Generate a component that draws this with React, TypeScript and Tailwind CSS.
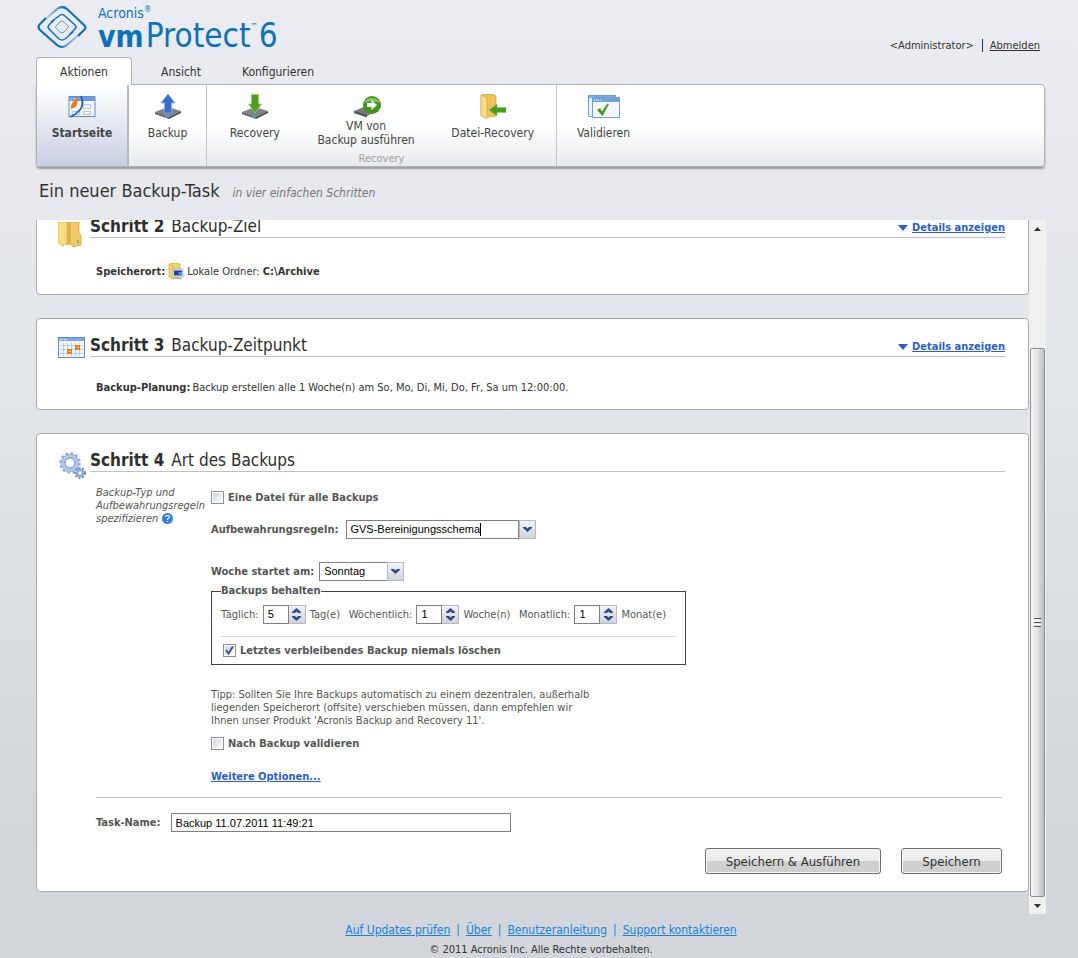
import React from "react";

const Logo = () => (
  <div className="flex items-start gap-[11px] pl-px">
    <svg className="mt-[5px]" width="50" height="44" viewBox="0 0 50 44" fill="none">
      <defs>
        <linearGradient id="fadeA" gradientUnits="userSpaceOnUse" x1="5" y1="17" x2="38" y2="34">
          <stop offset="0" stopColor="#0a72ba" stopOpacity="0.1" />
          <stop offset="0.35" stopColor="#0a72ba" />
          <stop offset="1" stopColor="#0a72ba" />
        </linearGradient>
        <linearGradient id="fadeB" gradientUnits="userSpaceOnUse" x1="45" y1="27" x2="12" y2="10">
          <stop offset="0" stopColor="#0a72ba" stopOpacity="0.1" />
          <stop offset="0.35" stopColor="#0a72ba" />
          <stop offset="1" stopColor="#0a72ba" />
        </linearGradient>
      </defs>
      <path d="M5 17 L20 4 Q25 0 30 4 L47 20 Q50 23 47 25 L41 31" stroke="url(#fadeA)" strokeWidth="2.200" />
      <path d="M45 27 L30 40 Q25 44 20 40 L3 25 Q0 22 3 19 L9 13" stroke="url(#fadeB)" strokeWidth="2.200" />
      <path d="M14 17 L22 11 Q25 8 28 11 L38 20 Q40 22 38 24 L33 29" stroke="#0a72ba" strokeWidth="1.500" />
      <path d="M36 27 L28 34 Q25 36 22 34 L12 24 Q10 22 12 20 L17 15" stroke="#0a72ba" strokeWidth="1.500" />
      <path d="M23 17 Q25 15 27 17 L31 21 Q32 22 31 23 L27 27 Q25 29 23 27 L19 23 Q18 22 19 21 Z" stroke="#5c9fd2" />
    </svg>
    <div className="text-[#0a72ba]">
      <div className="mt-[6px] flex h-[14px] text-[14px] leading-[14px]">
        Acronis<span className="text-[8px] leading-[8px]">®</span>
      </div>
      <div className="flex h-[34px] items-start text-[33px] leading-[32px]">
        <span className="text-[30px] leading-[34px] font-bold">vm</span>
        <span className="ml-[2px]">Protect</span>
        <span className="text-[8px] leading-[14px]">™</span>
        <span className="ml-px">6</span>
      </div>
    </div>
  </div>
);

const StartIcon = () => (
  <svg width="28" height="28" viewBox="0 0 28 28">
    <rect x="1" y="2.500" width="26" height="20" fill="#f1f6fd" stroke="#5f8fd0" />
    <rect x="1" y="3" width="26" height="4" fill="#6f9ddb" />
    <path d="M3 5h1M5 5h1M7 5h1" stroke="#fff" />
    <path d="M15.500 10.500h7v4h-7zM15.500 17.500h7v3h-7zM4.500 17.500h7v3h-7z" fill="none" stroke="#b9c4d4" />
    <path d="M11 3 Q2 8 3 15 L8 13 Z" fill="#f27a1a" />
    <path d="M13 2 Q19 15 2 23" fill="none" stroke="#2b59c9" strokeWidth="1.800" />
  </svg>
);

const Disk = () => (
  <g>
    <path d="M1 18 L14 13 L27 17 L15 23 Z" fill="#808487" />
    <path d="M1 18 L15 23 V25 L1 20 Z" fill="#595c5f" />
    <path d="M15 23 L27 17 V19 L15 25 Z" fill="#484b4e" />
    <path d="M11 22 L15 23" stroke="#4aa3ee" strokeWidth="1.500" />
  </g>
);

const BackupIcon = () => (
  <svg width="28" height="28" viewBox="0 0 28 28">
    <Disk />
    <path d="M14 0 L21 9 H17.500 V19 H10.500 V9 H7 Z" fill="#3a6bd0" stroke="#8aaeea" strokeWidth="0.700" />
  </svg>
);

const RecoveryIcon = () => (
  <svg width="28" height="28" viewBox="0 0 28 28">
    <Disk />
    <path d="M14 19 L20.500 10 H17.500 V0.500 H10.500 V10 H7.500 Z" fill="#4c9f1f" stroke="#93cf6d" strokeWidth="0.700" />
  </svg>
);

const RunVmIcon = () => (
  <svg className="ml-1" width="28" height="25" viewBox="0 3 28 25">
    <path d="M0 20 L12 15 L22 20 L13 25 L0 22 Z" fill="#777b7e" />
    <path d="M0 20 L13 24 V26.500 L0 22 Z" fill="#505356" />
    <circle cx="18" cy="14" r="9" fill="#43951c" />
    <path d="M10 12 a9 9 0 0 1 16 0 Q18 8 10 12" fill="#8cc665" />
    <path d="M13 12 h4.500 v-3 l5.500 5 l-5.500 5 v-3 H13 Z" fill="#fff" />
  </svg>
);

const FolderRecoveryIcon = () => (
  <svg width="28" height="28" viewBox="0 0 28 28">
    <path d="M2 1 L14 0 L17 2 V22 L8 23 L2 21 Z" fill="#ecc25a" stroke="#c99b38" strokeWidth="0.700" />
    <path d="M2 1 L8 4 V25 L2 22 Z" fill="#f8dd8a" stroke="#d6ac4a" strokeWidth="0.700" />
    <path d="M10 16 L18 10 V13.500 H27 V18.500 H18 V22 Z" fill="#4b9d20" stroke="#86c35c" strokeWidth="0.500" />
  </svg>
);

const ValidateIcon = () => (
  <svg width="32" height="28" viewBox="0 0 32 28">
    <path d="M.5 1.500H27.500V22.500H.5Z" fill="#eaf2fc" stroke="#6f9bd6" />
    <path d="M1 2H27V4H1Z" fill="#7fa8de" />
    <path d="M4.500 3.500H31.500V23.500H4.500Z" fill="#f4f9ff" stroke="#6f9bd6" />
    <path d="M5 4H31V8H5Z" fill="#739fdc" />
    <path d="M6 6h8" stroke="#fff" strokeDasharray="1 1" />
    <path d="M9 16 L12 14 L14 17.500 L19.500 9.500 L21 10 L14.500 22 Z" fill="#3f9c1a" />
  </svg>
);

const FolderIcon = () => (
  <svg width="28" height="28" viewBox="0 0 28 28">
    <path d="M8 0 H20 V22 L8 23 Z" fill="#e3b458" />
    <path d="M0 0 L9 0 V21 L5 24 L0 21 Z" fill="#f8dd7f" stroke="#d9b04e" strokeWidth="0.700" />
    <path d="M12 0 L21 0 V12 L23 13 V23 L15 25 L12 21 Z" fill="#f2ca69" stroke="#c79b3d" strokeWidth="0.700" />
    <path d="M20 18v3" stroke="#4fb56a" strokeWidth="1.500" />
  </svg>
);

const CalendarIcon = () => (
  <svg width="28" height="22" viewBox="0 0 28 22">
    <rect x=".5" y=".5" width="26" height="20" fill="#f3f7fd" stroke="#5f8bc9" />
    <rect x="1" y="1" width="25" height="3" fill="#7fa6dc" />
    <path d="M2 2.500h7" stroke="#fff" strokeDasharray="1 1" />
    <path d="M2 8.500H25M2 12.500H25M2 16.500H25M5.500 6V19M9.500 6V19M13.500 6V19M17.500 6V19M21.500 6V19" stroke="#b5cdeb" />
    <rect x="9" y="12" width="5" height="5" fill="#f0801f" />
    <rect x="17" y="8" width="5" height="5" fill="#f0801f" />
    <path d="M11 14.500h2M19 10.500h2" stroke="#ffe2bd" />
  </svg>
);

const GearsIcon = () => (
  <svg width="28" height="28" viewBox="0 0 28 28" fill="none">
    <circle cx="12" cy="11" r="9.500" stroke="#8ba8d6" strokeWidth="2.500" strokeDasharray="2.500 2.500" />
    <circle cx="12" cy="11" r="7" stroke="#b3c8ea" strokeWidth="4" />
    <circle cx="12" cy="11" r="5" stroke="#6688bd" />
    <circle cx="12" cy="11" r="8.800" stroke="#8aa5d2" strokeWidth="0.700" />
    <circle cx="22" cy="21" r="5" stroke="#6383b8" strokeWidth="2" strokeDasharray="1.800 1.800" />
    <circle cx="22" cy="21" r="3.500" stroke="#8fabd8" strokeWidth="2.200" />
    <circle cx="22" cy="21" r="2.200" fill="#fff" stroke="#5c7db4" strokeWidth="0.700" />
  </svg>
);

const LocalFolderIcon = () => (
  <svg width="16" height="17" viewBox="0 0 16 17">
    <path d="M1 1 L6 0 L12 1 V14 L4 16 L1 14 Z" fill="#f3d470" stroke="#c9a244" strokeWidth="0.700" />
    <path d="M5 2V8" stroke="#d2aa48" />
    <rect x="5" y="6" width="10" height="8" fill="#e9edf3" stroke="#9aa3b3" strokeWidth="0.700" />
    <rect x="6" y="7.500" width="8" height="5" fill="#1e3fb0" />
    <path d="M10 9h4v3h-3z" fill="#4a90d8" />
    <path d="M7 15.500h7" stroke="#a6adb8" />
  </svg>
);

const Chevron = ({ up = false }: { up?: boolean }) => (
  <svg width="9" height="5" viewBox="0 0 9 5" className={up ? "rotate-180" : ""}>
    <path d="M0 0 H3 L4.500 1.500 L6 0 H9 V1 L4.500 5 L0 1 Z" fill="#2c4a8c" />
  </svg>
);

const toolButton = "flex flex-col items-center pt-[9px] text-center leading-[14px]";

const DetailsLink = () => (
  <a href="#details" className="flex items-center gap-1 text-[11px] leading-[14px] font-bold text-[#2a5fc9]">
    <svg width="10" height="6" viewBox="0 0 10 6">
      <path d="M0 0H10L5 6Z" fill="#2a5fc9" />
    </svg>
    <span className="underline">Details anzeigen</span>
  </a>
);

type StepProps = {
  step: string;
  title: string;
  icon: React.ReactNode;
  details?: boolean;
  children: React.ReactNode;
};

const Step: React.FC<StepProps> = ({ step, title, icon, details, children }) => (
  <section className="shrink-0 rounded border border-[#a9abae] bg-white pt-[14px] pr-[23px] pl-[21px]">
    <div className="flex h-6 gap-1">
      <div className="mt-1 w-7 shrink-0">{icon}</div>
      <div className="flex flex-1 justify-between border-b border-[#c0c0c0]">
        <h2 className="flex gap-[7px] text-[17px] leading-6 text-[#2e2e2e]">
          <b>{step}</b>
          <span>{title}</span>
        </h2>
        {details && (
          <div className="flex items-center pt-1">
            <DetailsLink />
          </div>
        )}
      </div>
    </div>
    <div className="pl-[38px]">{children}</div>
  </section>
);

const CheckBox = ({ id, label, checked = false }: { id: string; label: string; checked?: boolean }) => (
  <div className="flex h-[13px] items-center gap-1 font-bold">
    <span className="relative flex h-[13px] w-[13px]">
      <input
        id={id}
        type="checkbox"
        defaultChecked={checked}
        className="peer h-[13px] w-[13px] appearance-none border border-[#8e8f8f] bg-linear-to-br from-[#cfd3d8] to-white shadow-[inset_0_0_0_1px_white]"
      />
      <svg className="pointer-events-none absolute inset-0 hidden peer-checked:block" width="13" height="13" viewBox="0 0 13 13">
        <path d="M3 6 L5.500 9.500 L10 2.500" fill="none" stroke="#3c549c" strokeWidth="2" />
      </svg>
    </span>
    <label htmlFor={id}>{label}</label>
  </div>
);

const dropButton =
  "flex w-[17px] items-center justify-center border border-[#b4b7cd] bg-linear-to-b from-[#f2f2f4] to-[#d3d4d8]";
const fieldFont = "font-['Liberation_Sans',Arial,sans-serif] text-[11px] text-black";

const Spinner = ({ id, label, value, unit }: { id: string; label: string; value: number; unit: string }) => (
  <div className="flex items-center gap-1">
    <label htmlFor={id}>{label}</label>
    <div className="flex h-[19px]">
      <input id={id} defaultValue={value} className={`w-[26px] border border-[#7f8083] pl-1 ${fieldFont}`} />
      <div className="flex w-[17px] flex-col border border-l-0 border-[#b4b7cd] bg-linear-to-b from-[#f2f2f4] to-[#d3d4d8]">
        <button aria-label={`${label} mehr`} className="flex flex-1 items-center justify-center">
          <Chevron up />
        </button>
        <button aria-label={`${label} weniger`} className="flex flex-1 items-center justify-center">
          <Chevron />
        </button>
      </div>
    </div>
    <span>{unit}</span>
  </div>
);

const actionButton =
  "h-[26px] rounded-[3px] border border-[#707070] bg-linear-to-b from-[#f2f2f2] from-0% via-[#ebebeb] via-50% to-[#cfcfcf] to-50% text-[13px] text-[#333] shadow-[inset_0_0_0_1px_#f6f6f6]";

const footerLinks = ["Auf Updates prüfen", "Über", "Benutzeranleitung", "Support kontaktieren"];

const App: React.FC = () => {
  return (
    <div className="flex h-screen flex-col bg-linear-to-b from-[#ebecf1] via-[#e2e5e9] via-40% to-[#d2d5da] to-90% pr-8 pl-9 font-['DejaVu_Sans_Condensed','DejaVu_Sans',Tahoma,sans-serif] text-[11px] leading-[13px] text-[#333]">
      <header className="flex h-[57px] shrink-0 justify-between">
        <Logo />
        <div className="mt-[38px] mr-[6px] flex h-[14px] items-center">
          <span>&lt;Administrator&gt;</span>
          <span className="mr-[7px] ml-2 h-[13px] w-px bg-[#333]" />
          <a href="#logout" className="underline">Abmelden</a>
        </div>
      </header>

      {/* Tabs */}
      <nav className="relative z-10 -mb-px flex h-7 shrink-0 text-xs">
        <button className="w-24 rounded-t-[4px] border border-b-0 border-[#b0b2b5] bg-white">Aktionen</button>
        <button className="w-[98px] pt-px">Ansicht</button>
        <button className="w-24 pt-px">Konfigurieren</button>
      </nav>

      {/* Ribbon */}
      <div className="mr-px flex h-[83px] shrink-0 rounded-r-[4px] rounded-bl-[4px] border border-[#b0b2b5] bg-linear-to-b from-white from-50% to-[#e7eaed] text-xs text-[#444] shadow-[0_2px_2px_#9a9c9f]">
        <button className={`${toolButton} w-[92px] border-r-2 border-[#b8b9bb] bg-linear-to-b from-white to-[#c8cfdf] font-bold`}>
          <StartIcon />
          <span className="mt-1">Startseite</span>
        </button>
        <button className={`${toolButton} w-[78px] border-r border-[#c3c5c8]`}>
          <BackupIcon />
          <span className="mt-1">Backup</span>
        </button>
        <div className="flex w-[350px] flex-col border-r border-[#c3c5c8]">
          <div className="flex flex-1">
            <button className={`${toolButton} w-24`}>
              <RecoveryIcon />
              <span className="mt-1">Recovery</span>
            </button>
            <button className={`${toolButton} w-[127px]`}>
              <RunVmIcon />
              <span>VM von<br />Backup ausführen</span>
            </button>
            <button className={`${toolButton} w-[127px]`}>
              <FolderRecoveryIcon />
              <span className="mt-1">Datei-Recovery</span>
            </button>
          </div>
          <div className="text-center text-[11px] leading-[14px] text-[#a0a0a0]">Recovery</div>
        </div>
        <button className={`${toolButton} w-[93px]`}>
          <ValidateIcon />
          <span className="mt-1">Validieren</span>
        </button>
      </div>

      <div className="flex h-[53px] shrink-0 items-baseline gap-[13px] pt-3 pl-[3px]">
        <h1 className="text-[18px] leading-6">Ein neuer Backup-Task</h1>
        <span className="text-xs text-[#777] italic">in vier einfachen Schritten</span>
      </div>

      {/* Steps, scrolled to the last one */}
      <main className="flex min-h-0 flex-1">
        <div className="flex min-w-0 flex-1 flex-col justify-end gap-[23px] overflow-hidden pb-[22px]">
          <Step step="Schritt 2" title="Backup-Ziel" icon={<div className="pt-1"><FolderIcon /></div>} details>
            <div className="flex h-[56px] items-center gap-[3px] pt-[10px]">
              <b>Speicherort:</b>
              <LocalFolderIcon />
              <span>Lokale Ordner: <b>C:\Archive</b></span>
            </div>
          </Step>

          <Step step="Schritt 3" title="Backup-Zeitpunkt" icon={<CalendarIcon />} details>
            <div className="flex h-[52px] gap-[2px] pt-6">
              <b>Backup-Planung:</b>
              <span>Backup erstellen alle 1 Woche(n) am So, Mo, Di, Mi, Do, Fr, Sa um 12:00:00.</span>
            </div>
          </Step>

          <Step step="Schritt 4" title="Art des Backups" icon={<GearsIcon />}>
            <div className="flex text-[#555]">
              <div className="w-[115px] shrink-0 pt-[14px] italic">
                Backup-Typ und
                <br />
                Aufbewahrungsregeln
                <br />
                <span className="flex items-center gap-1">
                  spezifizieren
                  <svg width="11" height="11" viewBox="0 0 11 11">
                    <circle cx="5.500" cy="5.500" r="5.500" fill="#2f80e0" />
                    <path d="M3.500 4 Q3.700 2.500 5.500 2.500 Q7.500 2.500 7.300 4.200 Q7 5.300 5.500 6 V7 M5.500 8 V9" fill="none" stroke="#fff" strokeWidth="1.200" />
                  </svg>
                </span>
              </div>

              <div className="flex-1 pt-[19px]">
                <CheckBox id="single-file" label="Eine Datei für alle Backups" />

                <div className="mt-4 flex h-[19px] items-center gap-2">
                  <label htmlFor="rules" className="font-bold">Aufbewahrungsregeln:</label>
                  <div className="flex h-[19px] w-[190px]">
                    <div className="flex flex-1 items-center border border-[#7f8083] pl-[3px]">
                      <input
                        id="rules"
                        role="combobox"
                        defaultValue="GVS-Bereinigungsschema"
                        className={`[field-sizing:content] ${fieldFont}`}
                      />
                      <span className="h-[13px] w-px bg-black" />
                    </div>
                    <button aria-label="Regeln öffnen" className={dropButton}>
                      <Chevron />
                    </button>
                  </div>
                </div>

                <div className="mt-[23px] flex h-[19px] items-center gap-[5px]">
                  <label htmlFor="weekday" className="font-bold">Woche startet am:</label>
                  <div className="relative flex h-[19px] w-[85px]">
                    <select id="weekday" className={`w-full appearance-none border border-[#7f8083] pl-1 ${fieldFont}`}>
                      <option>Sonntag</option>
                      <option>Montag</option>
                    </select>
                    <span className={`${dropButton} pointer-events-none absolute inset-y-0 right-0`}>
                      <Chevron />
                    </span>
                  </div>
                </div>

                <fieldset className="mt-1 w-[475px] border border-[#444] px-[9px] pb-[7px]">
                  <legend className="leading-3 font-bold">Backups behalten</legend>
                  <div className="mt-2 flex justify-between border-b border-[#dedede] pr-[10px] pb-3">
                    <Spinner id="daily" label="Täglich:" value={5} unit="Tag(e)" />
                    <Spinner id="weekly" label="Wöchentlich:" value={1} unit="Woche(n)" />
                    <Spinner id="monthly" label="Monatlich:" value={1} unit="Monat(e)" />
                  </div>
                  <div className="mt-[7px] pl-[2px]">
                    <CheckBox id="keep-last" label="Letztes verbleibendes Backup niemals löschen" checked />
                  </div>
                </fieldset>

                <p className="mt-[23px]">
                  Tipp: Sollten Sie Ihre Backups automatisch zu einem dezentralen, außerhalb
                  <br />
                  liegenden Speicherort (offsite) verschieben müssen, dann empfehlen wir
                  <br />
                  Ihnen unser Produkt 'Acronis Backup and Recovery 11'.
                </p>

                <div className="mt-[10px]">
                  <CheckBox id="validate" label="Nach Backup validieren" />
                </div>

                <a href="#options" className="mt-5 block w-fit font-bold text-[#2a5fc9] underline">
                  Weitere Optionen...
                </a>
              </div>
            </div>

            <div className="mt-[14px] mr-[3px] border-t border-[#c0c0c0] pb-[17px] text-[#555]">
              <div className="mt-[15px] flex h-[19px] items-center gap-[10px]">
                <label htmlFor="task-name" className="font-bold">Task-Name:</label>
                <input
                  id="task-name"
                  defaultValue="Backup 11.07.2011 11:49:21"
                  className={`h-[19px] w-[340px] border border-[#7f8083] pl-1 ${fieldFont}`}
                />
              </div>
              <div className="mt-4 flex justify-end gap-5">
                <button className={`${actionButton} w-[176px]`}>Speichern &amp; Ausführen</button>
                <button className={`${actionButton} w-[101px]`}>Speichern</button>
              </div>
            </div>
          </Step>
        </div>

        <div className="flex w-[17px] shrink-0 flex-col bg-[#f0f0f0]">
          <button aria-label="Nach oben" className="flex h-[17px] items-center justify-center">
            <svg width="7" height="4" viewBox="0 0 7 4"><path d="M0 4L3.500 0L7 4Z" fill="#333" /></svg>
          </button>
          <div className="h-[111px]" />
          <div className="mx-px flex flex-1 flex-col items-center justify-center gap-px rounded-[2px] border border-[#8f9093] bg-linear-to-r from-[#f5f5f5] via-[#e2e2e4] to-[#bcbdc2]">
            <span className="h-px w-[7px] bg-[#555]" />
            <span className="h-px w-[7px] bg-white" />
            <span className="h-px w-[7px] bg-[#555]" />
            <span className="h-px w-[7px] bg-white" />
            <span className="h-px w-[7px] bg-[#555]" />
          </div>
          <button aria-label="Nach unten" className="flex h-[17px] items-center justify-center">
            <svg width="7" height="4" viewBox="0 0 7 4"><path d="M0 0L3.500 4L7 0Z" fill="#333" /></svg>
          </button>
        </div>
      </main>

      <footer className="h-[44px] shrink-0 pt-2 text-center">
        <div className="flex justify-center gap-[6px] text-xs leading-4 text-[#1682dc]">
          {footerLinks.map((text, index) => (
            <React.Fragment key={text}>
              {index > 0 && <span>|</span>}
              <a href="#footer" className="underline">{text}</a>
            </React.Fragment>
          ))}
        </div>
        <div className="mt-[5px]">© 2011 Acronis Inc. Alle Rechte vorbehalten.</div>
      </footer>
    </div>
  );
};

export default App;
